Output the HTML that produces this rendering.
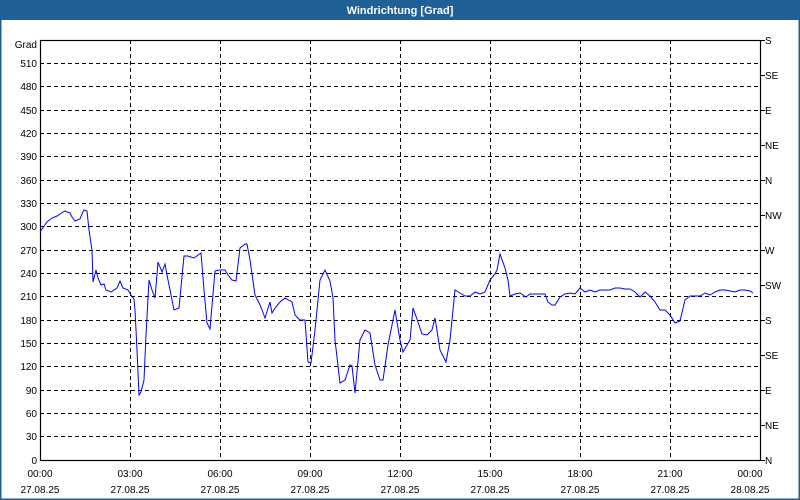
<!DOCTYPE html>
<html><head><meta charset="utf-8"><style>
html,body{margin:0;padding:0;background:#fff;}
body{width:800px;height:500px;overflow:hidden;position:relative;font-family:"Liberation Sans",Tahoma,sans-serif;}
</style></head><body>
<svg width="800" height="500" xmlns="http://www.w3.org/2000/svg" style="position:absolute;left:0;top:0" font-family="Liberation Sans, sans-serif" font-size="10">
<rect x="0" y="0" width="800" height="500" fill="#fff"/>
<rect x="0" y="0" width="800" height="20" fill="#1f6096"/>
<rect x="0.5" y="0.5" width="799" height="499" fill="none" stroke="#1f6096" stroke-width="2"/>
<text x="400" y="14" text-anchor="middle" fill="#fff" font-weight="bold" font-size="11">Windrichtung [Grad]</text>
<g stroke="#000" stroke-dasharray="4,3" stroke-width="1">
<line x1="40" y1="63.5" x2="760" y2="63.5"/><line x1="40" y1="86.5" x2="760" y2="86.5"/><line x1="40" y1="110.5" x2="760" y2="110.5"/><line x1="40" y1="133.5" x2="760" y2="133.5"/><line x1="40" y1="156.5" x2="760" y2="156.5"/><line x1="40" y1="180.5" x2="760" y2="180.5"/><line x1="40" y1="203.5" x2="760" y2="203.5"/><line x1="40" y1="226.5" x2="760" y2="226.5"/><line x1="40" y1="250.5" x2="760" y2="250.5"/><line x1="40" y1="273.5" x2="760" y2="273.5"/><line x1="40" y1="296.5" x2="760" y2="296.5"/><line x1="40" y1="320.5" x2="760" y2="320.5"/><line x1="40" y1="343.5" x2="760" y2="343.5"/><line x1="40" y1="366.5" x2="760" y2="366.5"/><line x1="40" y1="390.5" x2="760" y2="390.5"/><line x1="40" y1="413.5" x2="760" y2="413.5"/><line x1="40" y1="436.5" x2="760" y2="436.5"/>
<line x1="130.5" y1="40" x2="130.5" y2="460"/><line x1="220.5" y1="40" x2="220.5" y2="460"/><line x1="310.5" y1="40" x2="310.5" y2="460"/><line x1="400.5" y1="40" x2="400.5" y2="460"/><line x1="490.5" y1="40" x2="490.5" y2="460"/><line x1="580.5" y1="40" x2="580.5" y2="460"/><line x1="670.5" y1="40" x2="670.5" y2="460"/>
</g>
<rect x="40.5" y="40.5" width="720" height="420" fill="none" stroke="#000" stroke-width="1.2"/>
<g stroke="#000">
<line x1="760" y1="40.5" x2="765" y2="40.5"/><line x1="760" y1="75.5" x2="765" y2="75.5"/><line x1="760" y1="110.5" x2="765" y2="110.5"/><line x1="760" y1="145.5" x2="765" y2="145.5"/><line x1="760" y1="180.5" x2="765" y2="180.5"/><line x1="760" y1="215.5" x2="765" y2="215.5"/><line x1="760" y1="250.5" x2="765" y2="250.5"/><line x1="760" y1="285.5" x2="765" y2="285.5"/><line x1="760" y1="320.5" x2="765" y2="320.5"/><line x1="760" y1="355.5" x2="765" y2="355.5"/><line x1="760" y1="390.5" x2="765" y2="390.5"/><line x1="760" y1="425.5" x2="765" y2="425.5"/><line x1="760" y1="460.5" x2="765" y2="460.5"/>
</g>
<g text-anchor="end" fill="#000">
<text x="37" y="48">Grad</text>
<text x="37" y="67">510</text><text x="37" y="90">480</text><text x="37" y="114">450</text><text x="37" y="137">420</text><text x="37" y="160">390</text><text x="37" y="184">360</text><text x="37" y="207">330</text><text x="37" y="230">300</text><text x="37" y="254">270</text><text x="37" y="277">240</text><text x="37" y="300">210</text><text x="37" y="324">180</text><text x="37" y="347">150</text><text x="37" y="370">120</text><text x="37" y="394">90</text><text x="37" y="417">60</text><text x="37" y="440">30</text><text x="37" y="464">0</text>
</g>
<g fill="#000">
<text x="765" y="44">S</text><text x="765" y="79">SE</text><text x="765" y="114">E</text><text x="765" y="149">NE</text><text x="765" y="184">N</text><text x="765" y="219">NW</text><text x="765" y="254">W</text><text x="765" y="289">SW</text><text x="765" y="324">S</text><text x="765" y="359">SE</text><text x="765" y="394">E</text><text x="765" y="429">NE</text><text x="765" y="464">N</text>
</g>
<g text-anchor="middle" fill="#000">
<text x="40" y="477">00:00</text><text x="130" y="477">03:00</text><text x="220" y="477">06:00</text><text x="310" y="477">09:00</text><text x="400" y="477">12:00</text><text x="490" y="477">15:00</text><text x="580" y="477">18:00</text><text x="670" y="477">21:00</text><text x="750" y="477">00:00</text>
<text x="40" y="493">27.08.25</text><text x="130" y="493">27.08.25</text><text x="220" y="493">27.08.25</text><text x="310" y="493">27.08.25</text><text x="400" y="493">27.08.25</text><text x="490" y="493">27.08.25</text><text x="580" y="493">27.08.25</text><text x="670" y="493">27.08.25</text><text x="750" y="493">28.08.25</text>
</g>
<polyline fill="none" stroke="#0000ff" stroke-width="1" points="40,232 47,222 52,218 57,216 63,212 65,211 70,213 72,217 75,221 80,219 82,214 84,210 87,211 89,230 92,250 93,282 96,270 98,278 101,285 104,284 106,290 111,292 117,288 120,281 123,288 128,290 131,295 134,299 135,310 137,350 139,395 141,392 144,380 146,335 149,280 152,290 155,298 158,262 162,272 165,264 167,275 174,310 179,308 184,256 188,256 194,258 201,253 204,290 207,323 210,329 215,271 220,270 225,270 228,275 232,280 236,281 240,248 245,244 247,244 250,260 255,295 260,305 262,310 265,318 270,302 272,313 275,308 280,302 285,298 292,302 295,315 300,320 305,320 308,362 311,363 315,330 320,280 325,270 330,281 333,298 335,340 340,383 345,380 350,365 352,366 355,393 360,340 365,330 370,333 375,365 380,380 383,380 388,345 392,325 395,310 400,340 403,352 407,345 410,340 413,308 418,322 422,334 427,335 432,330 435,318 440,350 446,362 450,340 455,290 460,293 465,296 470,296 475,292 480,294 485,292 490,280 495,274 497,270 500,254 505,268 508,280 510,296 515,294 520,293 526,297 530,294 545,294 548,302 552,305 555,305 560,297 565,294 570,293 575,294 580,288 585,292 590,290 595,292 600,290 610,290 615,288 620,288 625,289 630,289 635,292 640,297 645,292 650,296 655,302 660,310 665,310 670,315 675,323 680,321 685,300 690,296 695,296 700,296 705,293 710,295 715,292 720,290 725,290 730,291 735,292 740,290 745,290 750,291 753,293"/>
</svg>
</body></html>
